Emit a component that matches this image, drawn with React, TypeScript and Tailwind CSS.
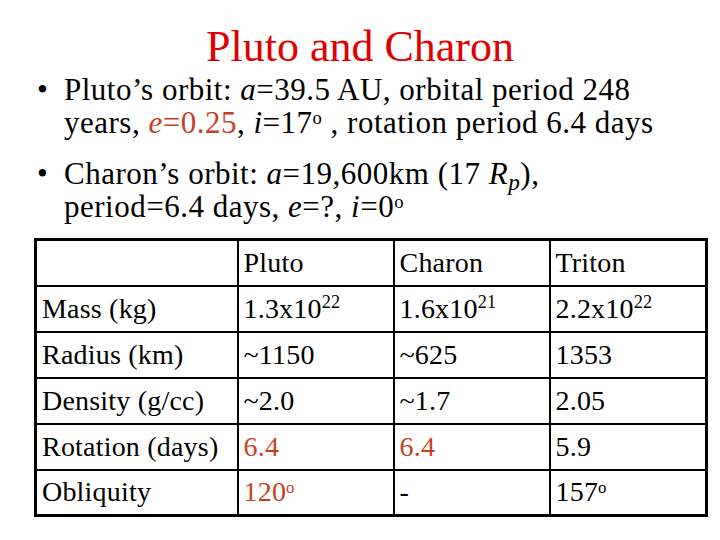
const ORANGE = "text-[#c8401e]"

const ROWS = [
  { label: "Mass (kg)", pluto: <>1.3x10<sup className="text-[0.65em]">22</sup></>, charon: <>1.6x10<sup className="text-[0.65em]">21</sup></>, triton: <>2.2x10<sup className="text-[0.65em]">22</sup></> },
  { label: "Radius (km)", pluto: "~1150", charon: "~625", triton: "1353" },
  { label: "Density (g/cc)", pluto: "~2.0", charon: "~1.7", triton: "2.05" },
  { label: "Rotation (days)", pluto: <span className={ORANGE}>6.4</span>, charon: <span className={ORANGE}>6.4</span>, triton: "5.9" },
  { label: "Obliquity", pluto: <span className={ORANGE}>120<sup className="text-[0.6em]">o</sup></span>, charon: "-", triton: <>157<sup className="text-[0.6em]">o</sup></> },
]

function Bullet({ children }: { children: React.ReactNode }) {
  return (
    <div className="flex">
      <span className="w-[27px] shrink-0">•</span>
      <p className="whitespace-nowrap">{children}</p>
    </div>
  )
}

export default function App() {
  return (
    <div className="w-[720px] h-[540px] bg-white text-black font-['Liberation_Serif',serif] overflow-hidden">
      {/* Title */}
      <h1 className="pt-[22px] text-center text-[44px] leading-[50px] text-[#e00000]">Pluto and Charon</h1>

      {/* Bullets */}
      <div className="mt-[1px] pl-[37px] text-[31px] leading-[33px] tracking-[0.5px] flex flex-col gap-[18px]">
        <Bullet>
          Pluto’s orbit: <i>a</i>=39.5 AU, orbital period 248
          <br />
          years, <span className={ORANGE}><i>e</i>=0.25</span>, <i>i</i>=17<sup className="text-[0.6em]">o</sup> , rotation period 6.4 days
        </Bullet>
        <Bullet>
          Charon’s orbit: <i>a</i>=19,600km (17 <i>R<sub>p</sub></i>),
          <br />
          period=6.4 days, <i>e</i>=?, <i>i</i>=0<sup className="text-[0.6em]">o</sup>
        </Bullet>
      </div>

      {/* Table */}
      <table className="mt-[15px] ml-[34px] w-[671px] table-fixed border-collapse border-[3px] border-black text-[28px] leading-[30px] tracking-[0.2px]">
        <colgroup>
          <col className="w-[202px]" />
          <col className="w-[156px]" />
          <col className="w-[156px]" />
          <col className="w-[157px]" />
        </colgroup>
        <tbody>
          <tr className="h-[46px]">
            <td className="border-2 border-black px-[5px]"></td>
            <td className="border-2 border-black px-[5px]">Pluto</td>
            <td className="border-2 border-black px-[5px]">Charon</td>
            <td className="border-2 border-black px-[5px]">Triton</td>
          </tr>
          {ROWS.map((r) => (
            <tr key={r.label} className="h-[46px]">
              <td className="border-2 border-black px-[5px] whitespace-nowrap">{r.label}</td>
              <td className="border-2 border-black px-[5px]">{r.pluto}</td>
              <td className="border-2 border-black px-[5px]">{r.charon}</td>
              <td className="border-2 border-black px-[5px]">{r.triton}</td>
            </tr>
          ))}
        </tbody>
      </table>
    </div>
  )
}
